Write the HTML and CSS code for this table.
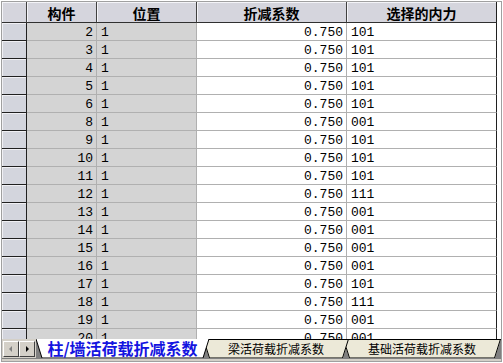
FILE: index.html
```html
<!DOCTYPE html>
<html lang="zh">
<head>
<meta charset="utf-8">
<link rel="stylesheet" href="styles.css">
</head>
<body>
<div class="window">
  <div class="frame">
    <div class="sheet">
      <div class="grid">
        <div class="hc corner"></div>
        <div class="hc">构件</div>
        <div class="hc">位置</div>
        <div class="hc">折减系数</div>
        <div class="hc last">选择的内力</div>

        <div class="rh"></div><div class="c g num">2</div><div class="c g">1</div><div class="c w num">0.750</div><div class="c w last">101</div>
        <div class="rh"></div><div class="c g num">3</div><div class="c g">1</div><div class="c w num">0.750</div><div class="c w last">101</div>
        <div class="rh"></div><div class="c g num">4</div><div class="c g">1</div><div class="c w num">0.750</div><div class="c w last">101</div>
        <div class="rh"></div><div class="c g num">5</div><div class="c g">1</div><div class="c w num">0.750</div><div class="c w last">101</div>
        <div class="rh"></div><div class="c g num">6</div><div class="c g">1</div><div class="c w num">0.750</div><div class="c w last">101</div>
        <div class="rh"></div><div class="c g num">8</div><div class="c g">1</div><div class="c w num">0.750</div><div class="c w last">001</div>
        <div class="rh"></div><div class="c g num">9</div><div class="c g">1</div><div class="c w num">0.750</div><div class="c w last">101</div>
        <div class="rh"></div><div class="c g num">10</div><div class="c g">1</div><div class="c w num">0.750</div><div class="c w last">101</div>
        <div class="rh"></div><div class="c g num">11</div><div class="c g">1</div><div class="c w num">0.750</div><div class="c w last">101</div>
        <div class="rh"></div><div class="c g num">12</div><div class="c g">1</div><div class="c w num">0.750</div><div class="c w last">111</div>
        <div class="rh"></div><div class="c g num">13</div><div class="c g">1</div><div class="c w num">0.750</div><div class="c w last">001</div>
        <div class="rh"></div><div class="c g num">14</div><div class="c g">1</div><div class="c w num">0.750</div><div class="c w last">001</div>
        <div class="rh"></div><div class="c g num">15</div><div class="c g">1</div><div class="c w num">0.750</div><div class="c w last">001</div>
        <div class="rh"></div><div class="c g num">16</div><div class="c g">1</div><div class="c w num">0.750</div><div class="c w last">001</div>
        <div class="rh"></div><div class="c g num">17</div><div class="c g">1</div><div class="c w num">0.750</div><div class="c w last">101</div>
        <div class="rh"></div><div class="c g num">18</div><div class="c g">1</div><div class="c w num">0.750</div><div class="c w last">111</div>
        <div class="rh"></div><div class="c g num">19</div><div class="c g">1</div><div class="c w num">0.750</div><div class="c w last">001</div>
        <div class="rh"></div><div class="c g num">20</div><div class="c g">1</div><div class="c w num">0.750</div><div class="c w last">001</div>
      </div>
    </div>
    <div class="tabbar">
      <div class="nav">
        <div class="btn"><svg width="14" height="14" viewBox="0 0 14 14"><polygon points="8,4 5,7 8,10" fill="#808080"/></svg></div>
        <div class="btn"><svg width="14" height="14" viewBox="0 0 14 14"><polygon points="6,4 9,7 6,10" fill="#000"/></svg></div>
      </div>
      <div class="tabs">
        <div class="tab active">
          <svg class="shape" width="173" height="19" viewBox="0 0 173 19"><polygon points="0,0 6,19 167,19 173,0" fill="#fff"/><polyline points="0,0 6,19 167,19 173,0" fill="none" stroke="#000" stroke-width="1"/></svg>
          <span class="label">柱/墙活荷载折减系数</span>
        </div>
        <div class="tab t2">
          <svg class="shape" width="146" height="19" viewBox="0 0 146 19"><polygon points="0,0 6,19 140,19 146,0" fill="#ece9d8"/><polyline points="0,0.5 146,0.5" fill="none" stroke="#000"/><polyline points="0.5,0 6.5,19 139.5,19 145.5,0" fill="none" stroke="#000"/></svg>
          <span class="label">梁活荷载折减系数</span>
        </div>
        <div class="tab t3">
          <svg class="shape" width="158" height="19" viewBox="0 0 158 19"><polygon points="0,0 6,19 152,19 158,0" fill="#ece9d8"/><polyline points="0,0.5 158,0.5" fill="none" stroke="#000"/><polyline points="0.5,0 6.5,19 151.5,19 157.5,0" fill="none" stroke="#000"/></svg>
          <span class="label">基础活荷载折减系数</span>
        </div>
      </div>
    </div>
    <div class="bottom"></div>
  </div>
</div>
</body>
</html>
```

FILE: styles.css
```css
html, body {
  margin: 0;
  padding: 0;
  background: #ffffff;
}

.window {
  width: 503px;
  height: 363px;
  box-sizing: border-box;
  padding: 1px;
  background: #ffffff;
}

.frame {
  width: 100%;
  height: 100%;
  box-sizing: border-box;
  border: 1px solid #a0a0a0;
  display: flex;
  flex-direction: column;
  background: #ffffff;
}

.sheet {
  height: 337px;
  overflow: hidden;
  flex: none;
}

.grid {
  display: grid;
  grid-template-columns: 25px 70px 100px 150px 150px;
  grid-template-rows: 21px;
  grid-auto-rows: 18px;
}

.hc {
  box-sizing: border-box;
  background: #d5d5dd;
  border-right: 1px solid #404040;
  border-bottom: 1px solid #303030;
  box-shadow: inset 1px 1px 0 #f4f4f8;
  font-family: "Noto Sans CJK SC", sans-serif;
  font-weight: bold;
  font-size: 14px;
  color: #000;
  display: flex;
  align-items: center;
  justify-content: center;
  line-height: 1;
  padding-top: 1px;
}

.hc.last {
  border-right-color: #202020;
}

.rh {
  box-sizing: border-box;
  background: #d3d5dd;
  border-right: 1px solid #202020;
  border-bottom: 1px solid #202020;
  box-shadow: inset 1px 1px 0 #f0f0f4;
}

.c {
  box-sizing: border-box;
  border-right: 1px solid #b0b0b0;
  border-bottom: 1px solid #b0b0b0;
  font-family: "Liberation Mono", monospace;
  font-size: 13px;
  color: #000;
  display: flex;
  align-items: center;
  padding: 1px 3px 0 4px;
  line-height: 1;
  white-space: nowrap;
}

.c.num {
  justify-content: flex-end;
}

.c.g {
  background: #d4d4d4;
}

.c.w {
  background: #ffffff;
}

.c.last {
  border-right-color: #202020;
}

.tabbar {
  height: 19px;
  flex: none;
  display: flex;
  background: #d4d0c8;
}

.nav {
  display: flex;
  padding: 2px 0 1px 1px;
  width: 34px;
  box-sizing: border-box;
}

.btn {
  width: 16px;
  height: 16px;
  box-sizing: border-box;
  background: #d4d0c8;
  border-top: 1px solid #ffffff;
  border-left: 1px solid #ffffff;
  border-right: 1px solid #404040;
  border-bottom: 1px solid #404040;
  display: flex;
  align-items: center;
  justify-content: center;
}

.tabs {
  flex: 1;
  display: flex;
  background: #808080;
}

.tab {
  position: relative;
  height: 19px;
  flex: none;
  display: flex;
  align-items: center;
  justify-content: center;
}

.tab .shape {
  position: absolute;
  left: 0;
  top: 0;
}

.tab .label {
  position: relative;
  white-space: nowrap;
}

.tab.active {
  width: 173px;
  z-index: 3;
}

.tab.active .label {
  font-family: "Noto Sans CJK SC", sans-serif;
  font-weight: bold;
  font-size: 16px;
  color: #1414e0;
  line-height: 1;
  margin-top: -2px;
}

.tab.t2 {
  width: 146px;
  margin-left: -6px;
  z-index: 2;
}

.tab.t3 {
  width: 158px;
  margin-left: -6px;
  z-index: 1;
}

.tab.t2 .label,
.tab.t3 .label {
  font-family: "Noto Sans CJK SC", sans-serif;
  font-size: 12px;
  color: #000;
  line-height: 1;
  margin-top: 1px;
}

.bottom {
  flex: 1;
  background: #d4d0c8;
  border-top: 1px solid #808080;
}
```
